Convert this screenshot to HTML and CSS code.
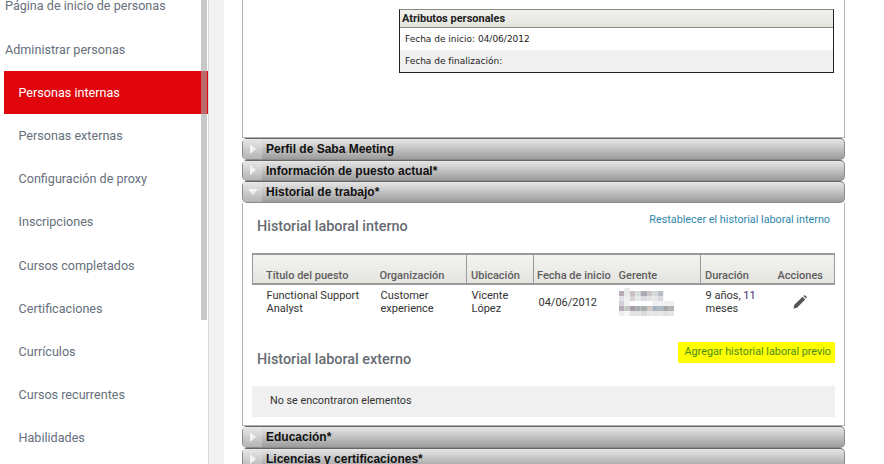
FILE: index.html
```html
<!DOCTYPE html>
<html lang="es">
<head>
<meta charset="utf-8">
<title>Historial de trabajo</title>
<link rel="stylesheet" href="styles.css">
</head>
<body>
<div class="page">
  <nav class="sidebar">
    <ul class="menu">
      <li class="item">Página de inicio de personas</li>
      <li class="item">Administrar personas</li>
      <li class="item sub active">Personas internas</li>
      <li class="item sub">Personas externas</li>
      <li class="item sub">Configuración de proxy</li>
      <li class="item sub">Inscripciones</li>
      <li class="item sub">Cursos completados</li>
      <li class="item sub">Certificaciones</li>
      <li class="item sub">Currículos</li>
      <li class="item sub">Cursos recurrentes</li>
      <li class="item sub">Habilidades</li>
    </ul>
    <div class="scrollbar"></div>
  </nav>
  <div class="gutter"></div>
  <main class="main">
    <section class="top-box">
      <div class="attrs">
        <div class="attrs-head">Atributos personales</div>
        <div class="attrs-row">Fecha de inicio: 04/06/2012</div>
        <div class="attrs-row alt">Fecha de finalización:</div>
      </div>
    </section>
    <div class="bar"><span class="bar-icon"><i class="tri-right"></i></span><span class="bar-title">Perfil de Saba Meeting</span></div>
    <div class="bar"><span class="bar-icon"><i class="tri-right"></i></span><span class="bar-title">Información de puesto actual*</span></div>
    <div class="bar"><span class="bar-icon"><i class="tri-down"></i></span><span class="bar-title">Historial de trabajo*</span></div>
    <section class="work">
      <div class="head-row first">
        <h2 class="heading">Historial laboral interno</h2>
        <a class="link">Restablecer el historial laboral interno</a>
      </div>
      <table class="jobs">
        <colgroup>
          <col class="c1"><col class="c2"><col class="c3"><col class="c4"><col class="c5"><col class="c6"><col class="c7">
        </colgroup>
        <thead>
          <tr>
            <th class="p13">Título del puesto</th>
            <th class="p3">Organización</th>
            <th class="p4 sep">Ubicación</th>
            <th class="p3 sep">Fecha de inicio</th>
            <th class="p4">Gerente</th>
            <th class="p4 sep">Duración</th>
            <th class="p5">Acciones</th>
          </tr>
        </thead>
        <tbody>
          <tr>
            <td class="p14">Functional Support Analyst</td>
            <td class="p4">Customer experience</td>
            <td class="p5">Vicente López</td>
            <td class="p5">04/06/2012</td>
            <td class="p4">
              <svg class="blur" width="55" height="28" viewBox="0 0 51 28" preserveAspectRatio="none" aria-hidden="true">
                <rect x="0" y="3" width="5" height="5" fill="#b9abb7"/><rect x="5" y="0" width="5" height="8" fill="#e6e8ea"/><rect x="10" y="3" width="5" height="5" fill="#cbc1c5"/><rect x="15" y="3" width="5" height="5" fill="#d9dfdf"/><rect x="20" y="3" width="6" height="5" fill="#aeaab8"/><rect x="26" y="3" width="5" height="5" fill="#c9c8c4"/><rect x="31" y="3" width="5" height="5" fill="#d5dadb"/><rect x="36" y="3" width="5" height="5" fill="#b9bcc6"/>
                <rect x="0" y="8" width="5" height="5" fill="#e3dfe6"/><rect x="5" y="8" width="5" height="5" fill="#eef0f2"/><rect x="10" y="8" width="5" height="5" fill="#d8d2d6"/><rect x="15" y="8" width="5" height="5" fill="#e4eaea"/><rect x="20" y="8" width="6" height="5" fill="#dcdbe2"/><rect x="26" y="8" width="5" height="5" fill="#e2e2df"/><rect x="31" y="8" width="5" height="5" fill="#e3e7e6"/><rect x="36" y="8" width="5" height="5" fill="#d8dae0"/>
                <rect x="0" y="13" width="5" height="5" fill="#d6d1d7"/><rect x="5" y="13" width="5" height="5" fill="#f0f1f3"/><rect x="31" y="13" width="5" height="5" fill="#eff1ef"/><rect x="36" y="13" width="5" height="5" fill="#f2f2f4"/><rect x="41" y="13" width="5" height="5" fill="#f1f1f1"/><rect x="46" y="13" width="5" height="5" fill="#eeeeee"/>
                <rect x="0" y="18" width="5" height="5" fill="#b8adba"/><rect x="5" y="18" width="5" height="5" fill="#c6c8c0"/><rect x="10" y="18" width="5" height="5" fill="#a99ea8"/><rect x="15" y="18" width="5" height="5" fill="#a9aaae"/><rect x="20" y="18" width="6" height="5" fill="#a9b1b0"/><rect x="26" y="18" width="5" height="5" fill="#d4c4c4"/><rect x="31" y="18" width="5" height="5" fill="#a5b2c0"/><rect x="36" y="18" width="5" height="5" fill="#aeb9c2"/><rect x="41" y="18" width="5" height="5" fill="#a4a6a4"/><rect x="46" y="18" width="5" height="5" fill="#b1b4ae"/>
                <rect x="0" y="23" width="5" height="5" fill="#efecf0"/><rect x="5" y="23" width="5" height="5" fill="#f6f5f3"/><rect x="10" y="23" width="5" height="5" fill="#e2e1e5"/><rect x="15" y="23" width="5" height="5" fill="#e3e3e6"/><rect x="20" y="23" width="6" height="5" fill="#d9dbd8"/><rect x="26" y="23" width="5" height="5" fill="#e3e6e6"/><rect x="31" y="23" width="5" height="5" fill="#e1e5e8"/><rect x="36" y="23" width="5" height="5" fill="#e7e9ea"/><rect x="41" y="23" width="5" height="5" fill="#dedfdf"/><rect x="46" y="23" width="5" height="5" fill="#e6e7e4"/>
              </svg>
            </td>
            <td class="p5">9 años, <span class="num">11</span> meses</td>
            <td class="action">
              <svg class="pencil" width="14" height="14" viewBox="0 0 14 14" aria-hidden="true">
                <path d="M0.5 13.5 L1.2 10 L9.5 1.8 L12.2 4.5 L4 12.8 Z" fill="#555"/>
                <path d="M10.4 0.9 L11.2 0.3 Q11.7 0 12.2 0.4 L13.6 1.8 Q14 2.3 13.7 2.8 L13.1 3.6 Z" fill="#555"/>
              </svg>
            </td>
          </tr>
        </tbody>
      </table>
      <div class="head-row second">
        <h2 class="heading">Historial laboral externo</h2>
        <a class="link add">Agregar historial laboral previo</a>
      </div>
      <div class="empty">No se encontraron elementos</div>
    </section>
    <div class="bar lower"><span class="bar-icon"><i class="tri-right"></i></span><span class="bar-title">Educación*</span></div>
    <div class="bar lower"><span class="bar-icon"><i class="tri-right"></i></span><span class="bar-title">Licencias y certificaciones*</span></div>
  </main>
</div>
</body>
</html>
```
FILE: styles.css
```css
* { box-sizing: border-box; }
html, body { margin: 0; padding: 0; background: #fff; }
body { width: 884px; height: 464px; overflow: hidden; font-family: Roboto, "Liberation Sans", sans-serif; }
.page { display: flex; height: 464px; overflow: hidden; }

.sidebar { position: relative; flex: 0 0 209px; height: 464px; overflow: hidden; border-right: 1px solid #d9d9d9; }
.menu { list-style: none; margin: -15.6px 0 0 4px; padding: 0; }
.item { height: 43.2px; line-height: 43px; font-size: 12.6px; color: #66707c; margin-left: 1px; }
.sub { padding-left: 14.5px; margin-left: 0; }
.active { background: #e0060c; color: #fff; }
.scrollbar { position: absolute; left: 201px; top: 0; width: 6px; height: 320px; background: rgba(167,167,167,.62); }

.gutter { flex: 0 0 15px; background: #f2f2f2; }

.main { flex: 0 0 660px; padding: 0 39px 0 18px; }
.main > * { width: 603px; }
.top-box { height: 138px; padding: 9px 10px 0 156px; border: 1px solid #b0b0b0; border-top: 0; }
.attrs { width: 435px; height: 64px; border: 1px solid #222; border-top: 1px solid #888; border-bottom: 2px solid #222; }
.attrs-head { height: 18px; line-height: 17px; padding-left: 2px; font-size: 11px; font-weight: 700; color: #222; background: linear-gradient(#f1f1ee, #e4e4df); border-bottom: 1px solid #888; }
.attrs-row { height: 22px; line-height: 22px; padding-left: 5px; font-family: "DejaVu Sans", sans-serif; font-size: 9px; color: #222; background: #fff; }
.attrs-row.alt { background: #f0f0f0; }

.bar { display: flex; height: 21.5px; border: 1px solid #8a8a8a; border-top-color: #666; border-radius: 5px; background: linear-gradient(#e6e6e6 0%, #c6c6c6 45%, #9c9c9c 100%); }
.bar.lower { height: 22px; }
.bar-icon { flex: 0 0 19px; display: flex; align-items: center; justify-content: center; background: linear-gradient(#e8e8e8, #b4b4b4); }
.tri-right { width: 0; height: 0; border-left: 6px solid #f2f2f2; border-top: 5px solid transparent; border-bottom: 5px solid transparent; }
.tri-down { width: 0; height: 0; border-top: 6px solid #f2f2f2; border-left: 5px solid transparent; border-right: 5px solid transparent; }
.bar-title { padding-left: 4px; line-height: 20px; font-family: "Liberation Sans", Arial, sans-serif; font-size: 12px; font-weight: 700; color: #111; }

.work { height: 223.5px; padding: 0 9px; border: 1px solid #b0b0b0; border-top: 0; }
.head-row { display: flex; justify-content: space-between; align-items: flex-start; }
.head-row.first { height: 50.5px; padding: 10.5px 5px 0 5px; }
.head-row.first .heading { margin-top: 6px; }
.head-row.second { height: 66px; padding: 22px 0 0 5px; }
.head-row.second .heading { margin-top: 10px; }
.heading { margin: 0; font-size: 14.4px; font-weight: 500; color: #666c72; line-height: 16px; }
.link { font-size: 10.8px; line-height: 14px; color: #2f86ab; }
.add { display: block; height: 21px; line-height: 19px; padding: 0 4px 0 7px; background: #ffff00; color: #4b8a22; }

.jobs { width: 582px; table-layout: fixed; border-collapse: collapse; }
.c1 { width: 124px; } .c2 { width: 90px; } .c3 { width: 67px; } .c4 { width: 81px; } .c5 { width: 86px; } .c6 { width: 72px; } .c7 { width: 62px; }
.jobs th { height: 30px; vertical-align: bottom; padding-bottom: 0; text-align: left; font-size: 11px; font-weight: 500; color: #5e5e5e; line-height: 14px; white-space: nowrap; background: linear-gradient(#f3f3f1, #e5e4df); border-top: 2px solid #9a9a9a; border-bottom: 2px solid #9a9a9a; }
.jobs th:first-child { border-left: 1px solid #9a9a9a; }
.jobs th:last-child { border-right: 1px solid #9a9a9a; }
.jobs th.sep { border-left: 1px solid #9a9a9a; }
.jobs td { height: 36px; padding-top: 0; vertical-align: middle; font-size: 11px; line-height: 13px; color: #333; }
.jobs .p13 { padding-left: 13px; }
.jobs .p14 { padding-left: 14px; }
.jobs .p3 { padding-left: 3px; }
.jobs .p4 { padding-left: 4px; }
.jobs .p5 { padding-left: 5px; }
.num { color: #4a2a6a; }
.blur { display: block; }
.jobs .action { padding-left: 20px; }
.pencil { display: block; }

.empty { height: 31px; padding-left: 18px; line-height: 30px; background: #f0f0f0; font-size: 10.8px; color: #333; }
```
